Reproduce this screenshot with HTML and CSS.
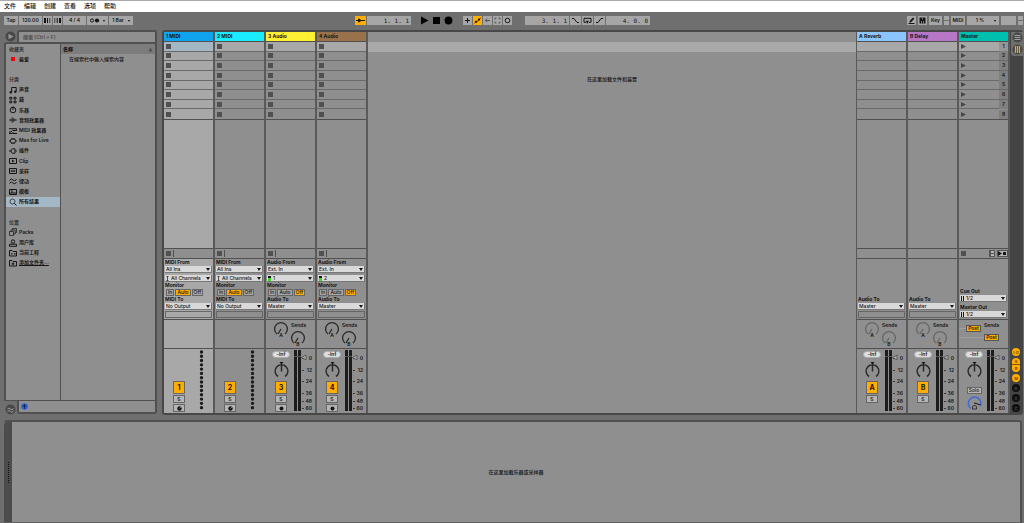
FILE: index.html
```html
<!DOCTYPE html>
<html lang="zh-CN">
<head>
<meta charset="utf-8">
<title>Live</title>
<link rel="stylesheet" href="styles.css">
</head>
<body>
<nav class="menu" aria-label="菜单">
  <button>文件</button><button>编辑</button><button>创建</button><button>查看</button><button>选项</button><button>帮助</button>
</nav>

<header class="toolbar">
  <div class="cluster">
    <button class="ctl w14">Tap</button>
    <button class="ctl w23">120.00</button>
    <button class="ctl w9" aria-label="减速"><svg width="9" height="9"><path d="M1 2h2v5H1zM4 2h1v5H4zM6.500 2h.7v5h-.7z"/></svg></button>
    <button class="ctl w9" aria-label="加速"><svg width="9" height="9"><path d="M1.500 2h.7v5h-.7zM3.700 2h1v5h-1zM6 2h2v5H6z"/></svg></button>
    <button class="ctl w23">4 / 4</button>
    <button class="ctl w21 drop" aria-label="节拍器"><svg width="11" height="9"><circle cx="3" cy="4.500" r="1.600" class="ln"/><circle cx="8" cy="4.500" r="2.100"/></svg></button>
    <button class="ctl w24 drop">1 Bar</button>
  </div>
  <div class="cluster center">
    <button class="ctl w11 on" aria-label="跟随"><svg width="11" height="9"><path d="M1 4.500h9" class="ln"/><path d="M3.500 2.200 6.800 4.500 3.500 6.800 2.900 4.500z"/></svg></button>
    <button class="ctl w44 pos">1. 1. 1</button>
    <div class="transport">
      <button aria-label="播放"><svg class="solid" width="9" height="9"><path d="M1 .5 8.500 4.500 1 8.500z"/></svg></button>
      <button aria-label="停止"><svg class="solid" width="9" height="9"><path d="M1 1h7v7H1z"/></svg></button>
      <button aria-label="录制"><svg class="solid" width="9" height="9"><circle cx="4.500" cy="4.500" r="3.900"/></svg></button>
    </div>
    <button class="ctl w9" aria-label="叠录"><svg width="9" height="9"><path d="M4.500 2v5M2 4.500h5" class="ln"/></svg></button>
    <button class="ctl w9 on" aria-label="自动化"><svg width="9" height="9"><path d="M1.300 7.500 3 5.800 5.800 4.500 7.800 1.500" class="ln thin"/><circle cx="3" cy="5.800" r="1.100"/><circle cx="6" cy="3.500" r="1.100"/></svg></button>
    <button class="ctl w9" aria-label="恢复"><svg width="9" height="9"><path d="M2 4.500h5M4.200 2.700 2.300 4.500 4.200 6.300" class="ln dim"/></svg></button>
    <button class="ctl w9" aria-label="捕获"><svg width="9" height="9"><path d="M2 3.500V2h1.500M5.500 2H7v1.500M7 5.500V7H5.500M3.500 7H2V5.500" class="ln dim"/></svg></button>
    <button class="ctl w9" aria-label="会话录制"><svg width="9" height="9"><circle cx="4.500" cy="4.500" r="2.300" class="ln"/></svg></button>
    <button class="ctl w44 pos loop">3. 1. 1</button>
    <button class="ctl w11" aria-label="穿入"><svg width="11" height="9"><path d="M2 2.500h2L7 6.500h2" class="ln"/></svg></button>
    <button class="ctl w11" aria-label="循环"><svg width="11" height="9"><path d="M4 6.300H2V2.300h7v4H7" class="ln"/><path d="M3.800 4.800h3L5.300 8z"/></svg></button>
    <button class="ctl w11" aria-label="穿出"><svg width="11" height="9"><path d="M2 6.500h2L7 2.500h2" class="ln"/></svg></button>
    <button class="ctl w44 pos">4. 0. 0</button>
  </div>
  <div class="cluster right">
    <button class="ctl w9" aria-label="绘制"><svg width="9" height="9"><path d="M1.500 7.500h6" class="ln"/><path d="m2.300 6.500.5-1.700L6 1.500l1.300 1.200L4 6.200z"/></svg></button>
    <button class="ctl w9" aria-label="键盘"><svg width="9" height="9"><path d="M1.500 1.500h6v6h-6z"/><path d="M3.500 5v2.500M5.500 5v2.500M4.500 1.500v2" class="ln pale thin"/></svg></button>
    <button class="ctl w13">Key</button>
    <span class="ctl lamp"></span>
    <button class="ctl w14">MIDI</button>
    <button class="ctl w32 drop">1 %</button>
    <span class="ctl w15"></span>
    <span class="ctl lamp"></span>
  </div>
</header>

<main class="main">
  <section class="browser">
    <div class="brow">
      <button class="round" aria-label="显示浏览器"><svg width="11" height="11"><circle cx="5.500" cy="5.500" r="5"/><path d="m3.500 2.700 5 2.800-5 2.800z" class="pale-fill"/></svg></button>
      <input class="search" type="search" aria-label="搜索" placeholder="搜索 (Ctrl + F)">
    </div>
    <div class="bbody">
      <ul class="side" id="side"></ul>
      <div class="files">
        <div class="fhead"><b>名称</b><svg width="5" height="5"><path d="M2.500.5 4.500 4.500h-4z"/></svg></div>
        <p>在搜索栏中输入搜索内容</p>
      </div>
    </div>
    <div class="brow foot">
      <button class="round" aria-label="律动库"><svg width="11" height="11"><circle cx="5.500" cy="5.500" r="5"/><path d="M2.500 5q1.500-2 3 0t3-.5M2.500 7.500q1.500-2 3 0t3-.5" class="ln pale"/></svg></button>
      <div class="preview"><button aria-label="试听"><svg width="7" height="7"><circle cx="3.500" cy="3.500" r="3.300" class="blue-fill"/><path d="M1.500 3h4M3.500 1v5" class="ln thin"/></svg></button></div>
    </div>
  </section>

  <section class="session">
    <div class="tracks" id="tracks"></div>
    <div class="dropzone"><div class="dz-head"></div><div class="dz-row"></div><p>在这里加载文件和装置</p></div>
    <div class="tracks" id="returns"></div>
    <div class="rail">
      <div class="views">
        <button aria-label="编排视图"><svg width="11" height="11"><circle cx="5.500" cy="5.500" r="5"/><path d="M2.500 3.500h6M2.500 5.500h6M2.500 7.500h6" class="ln pale"/></svg></button>
        <button aria-label="会话视图"><svg width="11" height="11"><circle cx="5.500" cy="5.500" r="5"/><path d="M3.500 2v7M5.500 2v7M7.500 2v7" class="ln gold"/></svg></button>
      </div>
      <div class="toggles">
        <button class="lit">I·O</button>
        <div class="pair"><button class="lit">S</button><button class="lit">R</button></div>
        <button class="lit">M</button><button>D</button><button>X</button><button>C</button>
      </div>
    </div>
  </section>
</main>

<section class="detail">
  <div class="grip"><i></i></div>
  <p>在这里加载乐器或采样器</p>
</section>
<script src="app.js"></script>
</body>
</html>
```

FILE: styles.css
```css
* { box-sizing: border-box; }
html, body { height: 100%; margin: 0; }
body {
  display: flex; flex-direction: column;
  background: #6f6f6f; color: #151515;
  font: 600 5px/7px Inter, "Noto Sans CJK SC", sans-serif;
  overflow: hidden;
}
button, input, select {
  font: inherit; color: inherit; margin: 0; padding: 0; border: 0;
  background: none; border-radius: 0; outline: 0;
}
button { display: flex; align-items: center; justify-content: center; white-space: nowrap; }
svg { display: block; fill: #151515; overflow: visible; flex: none; }
.ln { fill: none; stroke: #151515; stroke-width: 1; }
.thin { stroke-width: .7; }
.dim { stroke: #555; }
.pale { stroke: #a0a0a0; }
.gold { stroke: #f0a51a; stroke-width: 1.2; }
.solid { fill: #000; }
.pale-fill { fill: #969696; }
.blue-fill { fill: #2c62e0; }
p { margin: 0; font-weight: 500; }

.menu {
  display: flex; align-items: flex-start; gap: 8px; height: 12px; padding: 1px 4px 0;
  background: #fff; border-top: 1px solid #aaa; font-size: 6px; font-weight: 500; flex: none;
}

.toolbar {
  display: grid; grid-template-columns: 1fr auto 1fr; align-items: center;
  height: 18px; padding: 0 1px 1px 4px; flex: none;
}
.cluster { display: flex; gap: 1px; }
.center { margin-right: 22px; }
.right { justify-content: flex-end; gap: 2px; }
.ctl { height: 9px; background: #a6a6a6; position: relative; flex: none; }
.w9 { width: 9px; } .w11 { width: 11px; } .w13 { width: 13px; } .w14 { width: 14px; }
.w15 { width: 15px; } .w21 { width: 21px; } .w23 { width: 23px; } .w24 { width: 24px; }
.w32 { width: 32px; } .w44 { width: 44px; }
.on { background: #ffad00; }
.drop { padding-right: 6px; }
.drop::after {
  content: ""; position: absolute; right: 3px; top: 4px;
  border: 1px solid transparent; border-top: 2px solid #151515;
}
.pos { justify-content: flex-end; padding-right: 2px; font: 6px/7px "DejaVu Sans Mono", monospace; white-space: pre; }
.loop { margin-left: 12px; }
.transport { display: flex; gap: 3px; margin: 0 9px 0 8px; }
.lamp { width: 5px; }
.lamp::after { content: ""; position: absolute; left: 0; right: 0; top: 4px; height: 1px; background: #6f6f6f; }

.main { flex: 1; display: flex; gap: 5px; min-height: 0; padding: 0 1px 0 4px; }

.browser { width: 153px; display: flex; flex-direction: column; flex: none; }
.brow { display: flex; }
.round { width: 12px; height: 12px; border-radius: 6px; }
.round svg, .views svg { fill: #484848; }
.search, .preview {
  flex: 1; min-width: 0; margin-left: 1px; height: 12px; padding: 0 4px;
  background: #8f8f8f; border: 2px solid #505050; border-bottom: 0; border-radius: 3px 3px 0 0;
}
.search { appearance: none; }
.search::placeholder { color: #4c4c4c; opacity: 1; }
.bbody {
  flex: 1; display: flex; min-height: 0; background: #8f8f8f;
  border: 2px solid #505050; border-bottom-width: 1px; border-radius: 3px 0 0 0;
}
.side {
  width: 54px; height: 224px; margin: 0; padding: 0; list-style: none;
  display: grid; grid-template-rows: repeat(22, 1fr); flex: none;
}
.side li { display: flex; align-items: center; padding-left: 3px; color: #333; }
.side button { width: 100%; justify-content: flex-start; gap: 2px; color: #151515; }
.side .sel { background: #a3b7c4; }
.side .add span { text-decoration: underline; }
.files { flex: 1; border-left: 1px solid #505050; }
.fhead {
  display: flex; justify-content: space-between; align-items: center;
  height: 10px; padding: 0 2px; background: #7c7c7c;
}
.fhead svg { fill: #505050; }
.files p { padding: 2px 8px; }
.foot { align-items: flex-start; }
.foot .round { margin-top: 2px; }
.preview {
  display: flex; align-items: center; padding: 0 2px; height: 13px;
  border: 2px solid #505050; border-top: 0; border-radius: 0 0 3px 3px;
}

.session {
  flex: 1; display: flex; min-width: 0; background: #8f8f8f;
  border: 2px solid #484848; border-right: 0; border-radius: 3px;
}
.tracks { display: flex; flex: none; }
.dropzone { flex: 1; min-width: 0; text-align: center; border-right: 1px solid #5a5a5a; }
.dz-head { height: 10px; }
.dz-row { height: 10px; background: #a8a8a8; }
.dropzone p { margin-top: 24px; }
.track { width: 51px; display: flex; flex-direction: column; border-right: 2px solid #5a5a5a; }
.track.light { background: #a8a8a8; }
.name { height: 10px; padding: 0 2px; border-bottom: 1px solid #505050; justify-content: flex-start; font-weight: 700; }
.c1 { background: #10a4ee; } .c2 { background: #1aebff; } .c3 { background: #fff034; }
.c4 { background: #99724b; } .ca { background: #8bc5ff; } .cb { background: #b677c6; } .cm { background: #00bfaf; }
.slots { height: 78px; display: grid; grid-template-rows: repeat(8, minmax(0, 1fr)); border-bottom: 1px solid #505050; }
.slot { display: flex; align-items: center; justify-content: flex-start; padding-left: 2px; border-bottom: 1px solid #6a6a6a; }
.slot:first-child { background: #a8a8a8; }
.light .slot:first-child { background: #a5b7c4; }
.slot:last-child { border-bottom: 0; }
.slot b { margin-left: auto; width: 9px; height: 9px; line-height: 9px; text-align: center; background: #7f7f7f; font-weight: 600; }
.slot:first-child b { background: #969696; }
.sq { width: 5px; height: 5px; background: #505050; }
.empty { flex: 1; }
.stop {
  height: 11px; display: flex; align-items: center; gap: 2px; padding-left: 2px;
  background: #8f8f8f; border: 1px solid #505050; border-width: 1px 0;
}
.bar { width: 1px; height: 7px; background: #505050; }
.mini { height: 7px; background: #b5b5b5; border: 1px solid #555; }
.push { margin-left: auto; }

.io { height: 60px; padding: 0 1px 1px; display: flex; flex-direction: column; justify-content: flex-end; }
.io h4 { margin: 0; height: 7px; font: inherit; font-weight: 700; white-space: nowrap; }
.pick { position: relative; height: 7px; background: #d9d9d9; border: 1px solid #777; border-width: 0 1px 1px 0; display: flex; align-items: center; font-weight: 500; }
.pick select { width: 100%; height: 6px; line-height: 6px; padding-left: 1px; appearance: none; }
.pick svg { margin-left: 1px; }
.pick svg + select { padding-left: 2px; }
.pick::after {
  content: ""; position: absolute; right: 1px; top: 2px;
  border: 2px solid transparent; border-top: 3px solid #151515; border-bottom: 0;
}
.io .gap { margin-top: 2px; }
.mon { display: flex; gap: 1px; height: 7px; padding-left: 1px; }
.mon button { height: 7px; padding: 0 1px; background: #a6a6a6; border: 1px solid #666; line-height: 5px; font-weight: 500; }
.mon .on { background: #ffad00; }
.box { height: 7px; margin-top: 1px; border: 1px solid #666; }

.sends { height: 30px; border: 1px solid #505050; border-width: 1px 0; position: relative; }
.sends svg text, .mix svg text { font: 600 5px Inter, sans-serif; }
.faint .ring { stroke: #666; }
.ring { fill: none; stroke: #2a2a2a; stroke-width: 1; }
.post { position: absolute; height: 7px; width: 15px; background: #ffad00; border: 1px solid #555; }
.p1 { left: 7px; top: 5px; }
.p2 { left: 25px; top: 14px; }

.mix { height: 64px; padding: 2px 0 1px; display: flex; justify-content: space-between; }
.strip { width: 28px; padding-left: 2px; display: flex; flex-direction: column; align-items: center; }
.strip button { background: #b5b5b5; border: 1px solid #666; width: 12px; height: 8px; }
.strip .inf { width: 18px; height: 7px; border: 1px solid #aaa; border-radius: 4px; background: #dedede; }
.strip .pan { margin-top: 4px; }
.strip .act { height: 13px; margin: 3px 0 1px; background: #ffad00; font-size: 7px; font-weight: 700; }
.strip .first { margin-top: 30px; }
.strip .arm { margin-top: 1px; }
.strip .solo { width: 15px; height: 7px; margin: 9px 0 2px; font-weight: 500; }
.meter { margin-top: -1px; }

.rail { flex: none; width: 13px; background: #444; display: flex; flex-direction: column; justify-content: space-between; align-items: flex-end; }
.views { background: #6f6f6f; width: 12px; padding: 0 0 1px 1px; display: flex; flex-direction: column; gap: 1px; border-radius: 0 0 0 3px; }
.views button { width: 11px; height: 11px; }
.toggles { display: flex; flex-direction: column; gap: 2px; width: 8px; margin-right: 3px; padding-bottom: 1px; }
.toggles button { width: 8px; height: 8px; border-radius: 4px; background: #101010; color: #555; font-size: 4px; }
.toggles button.lit { background: #ffad00; color: #5a4000; }
.toggles .pair button:first-child { border-radius: 4px 4px 0 0; height: 7px; border-bottom: 1px solid #7a5800; }
.toggles .pair button:last-child { border-radius: 0 0 4px 4px; height: 7px; }
.detail {
  flex: none; height: 103px; margin: 5px 2px 0 4px; display: flex;
  background: #8f8f8f; border: 2px solid #505050; border-left: 0; border-bottom: 1px solid #606060;
  border-radius: 3px 3px 0 0;
}
.detail p { flex: 1; align-self: center; text-align: center; }
.grip { width: 8px; background: #4c4c4c; display: flex; align-items: center; justify-content: center; border-radius: 3px 0 0 0; }
.grip i { height: 21px; border-left: 1px dotted #111; }
```

FILE: app.js
```js
const svg = (w, h, body, cls = "") => `<svg class="${cls}" width="${w}" height="${h}">${body}</svg>`;

const icons = {
  fav: '<path d="M2 2h4v4H2z" style="fill:#f00"/>',
  note: '<path d="M2.700 6V1.500h4.500V5.500" class="ln"/><circle cx="1.800" cy="6.300" r="1.200"/><circle cx="6.300" cy="5.800" r="1.200"/>',
  drum: '<path d="M.8 1.300h2v1.800h-2zM5 1.300h2v1.800H5zM.8 5h2v1.800h-2zM5 5h2v1.800H5z" class="ln"/>',
  dial: '<circle cx="4" cy="4" r="2.800" class="ln"/><path d="M4 4V.5" class="ln"/>',
  wave: '<path d="M0 4h8M2 2.500v3M3.300 1v6M4.700 2v4M6 3v2" class="ln thin"/>',
  midi: '<path d="M0 1.700h7.500v1.800H3.500L2 5H0M3.500 6.500H8M0 6.500h3l1.500-1.500" class="ln"/>',
  max: '<rect x="1.500" y="2" width="5" height="4" rx="1.500" class="ln"/><path d="M0 4h1.500M6.500 4H8M3 1v1M5 1v1M3 6v1M5 6v1" class="ln"/>',
  plug: '<path d="M0 4h2M6.500 4H8M6 1.800H3.500Q2 2 2 4t1.500 2.200H6z" class="ln"/>',
  clip: '<path d="M.5 1.500h7v5h-7z" class="ln"/><path d="m3 2.500 2.500 1.500L3 5.500z"/>',
  sample: '<path d="M.5 1.500h7v5h-7z" class="ln"/><path d="M1.500 4h5M2.800 2.800v2.400M4 3.200v1.600M5.300 2.800v2.400" class="ln thin"/>',
  groove: '<path d="M.5 3.500q1.700-3 3.500-.5t3.500-1M.5 6.500q1.700-3 3.500-.5t3.500-1" class="ln"/>',
  tmpl: '<path d="M.5 1.500h7v5h-7zM.5 5h7M3 1.500V5" class="ln"/>',
  find: '<circle cx="3.500" cy="3.500" r="2.500" class="ln thin"/><path d="m5.300 5.300 2.200 2.200" class="ln"/>',
  packs: '<path d="M.5 3.500h4v4h-4zM2 3.500V2h4.200v4H4.500M3.500 2V.5h4v4H6.200" class="ln thin"/>',
  user: '<circle cx="4" cy="2.500" r="1.700" class="ln"/><path d="M.5 7.300V5.200h7v2.100z" class="ln"/>',
  folder: '<path d="M.5 1.500h2.500l1 1h3.500V7h-7z" class="ln"/><path d="M2 4.300h1.500v1.200H2zM5 4.300h1.500v1.200H5z"/>',
  add: '<path d="M.5 1.500h2.500l1 1h3.500V7h-7z" class="ln"/><path d="M4 3.500v2.600M2.700 4.800h2.600" class="ln"/>'
};

const side = [
  ["收藏夹"], ["最爱", "fav"], [""], ["分类"], ["声音", "note"], ["鼓", "drum"], ["乐器", "dial"],
  ["音频效果器", "wave"], ["MIDI 效果器", "midi"], ["Max for Live", "max"], ["插件", "plug"], ["Clip", "clip"],
  ["采样", "sample"], ["律动", "groove"], ["模板", "tmpl"], ["所有结果", "find"], [""], ["位置"],
  ["Packs", "packs"], ["用户库", "user"], ["当前工程", "folder"], ["添加文件夹...", "add"]
];
document.getElementById("side").innerHTML = side.map(([text, icon]) => {
  const cls = icon === "find" ? "sel" : icon === "add" ? "add" : "";
  return `<li class="${cls}">${icon ? `<button>${svg(8, 8, icons[icon])}<span>${text}</span></button>` : text}</li>`;
}).join("");

const square = '<i class="sq"></i>';
const playIcon = svg(5, 5, '<path d="M0 0 5 2.500 0 5z" style="fill:#484848"/>');
const pins = svg(3, 5, '<path d="M.5.5h2M1.500.5v4M.5 4.500h2" class="ln thin"/>');
const level = svg(3, 5, '<path d="M0 0h3v2H0z"/><path d="M0 2h3v3H0z" style="fill:#3ad820"/>');
const stereo = svg(3, 5, '<path d="M0 0h1v5H0zM2 0h1v5H2z"/>');

const pick = (label, value, icon = "", cls = "") =>
  `<div class="pick ${cls}">${icon}<select aria-label="${label}"><option>${value}</option></select></div>`;

function monitor(active) {
  return `<div class="mon">${["In", "Auto", "Off"].map(m => `<button class="${m === active ? "on" : ""}">${m}</button>`).join("")}</div>`;
}

function io(t) {
  if (t.kind === "master") {
    return `<h4>Cue Out</h4>${pick("Cue Out", "1/2", stereo)}<h4 class="gap">Master Out</h4>${pick("Master Out", "1/2", stereo)}`;
  }
  const midi = t.kind === "midi";
  const word = midi ? "MIDI" : "Audio";
  const from = t.kind === "return" ? "" :
    `<h4>${word} From</h4>${pick(word + " From", midi ? "All Ins" : "Ext. In")}` +
    pick("Channel", midi ? "All Channels" : t.input, midi ? pins : level, "gap") +
    `<h4>Monitor</h4>${monitor(midi ? "Auto" : "Off")}`;
  return `${from}<h4>${word} To</h4>${pick(word + " To", midi ? "No Output" : "Master")}<div class="box"></div>`;
}

function sendKnob(x, y, name) {
  return `<path class="ring" style="stroke-width:1.300" d="M${x - 4} ${y + 5}A6.400 6.400 0 1 1 ${x + 4} ${y + 5}M${x} ${y}L${x - 3} ${y + 5}"/>
    <text x="${x}" y="${y + 8}" text-anchor="middle">${name}</text>`;
}

function sends(t) {
  if (t.kind === "midi") return "";
  if (t.kind === "master") {
    return svg(49, 28, '<path d="M0 8.500h7M0 17.500h25" class="ln pale"/><text x="25" y="7">Sends</text>') +
      '<button class="post p1">Post</button><button class="post p2">Post</button>';
  }
  return svg(49, 28, sendKnob(15, 9, "A") + sendKnob(32, 18, "B") + '<text x="25" y="7">Sends</text>',
    t.kind === "return" ? "faint" : "");
}

function meter(t) {
  if (t.kind === "midi") {
    return svg(21, 60, '<path d="M9.500 2v57" style="stroke:#1c1c1c;stroke-width:3.400;stroke-linecap:round;stroke-dasharray:0 4.280"/>', "meter");
  }
  const marks = [[0, 8], [12, 20], [24, 31], [36, 43], [48, 51], [60, 58]];
  const scale = marks.map(([n, y]) => `<path d="M8 ${y + .5}h2" class="ln thin"/><text x="18" y="${y + 2}" text-anchor="end">${n}</text>`).join("");
  return svg(21, 61, `<path d="M0 0h3v61H0zM4 0h3v61H4z" style="fill:#1c1c1c"/><path d="M0 6.500h7" class="ln dim"/>${scale}
    <path d="M7.500 7.500 12 5v5z" style="fill:#aaa;stroke:#444;stroke-width:.7"/>`, "meter");
}

function strip(t) {
  if (t.kind === "midi") {
    return `<button class="act first">${t.key}</button><button>S</button>
      <button class="arm" aria-label="录音准备">${svg(5, 5, '<circle cx="2.500" cy="2.500" r="2.200"/><path d="m2.500 2.500 1.500-1.500" class="ln pale thin"/>')}</button>`;
  }
  const pan = svg(15, 16, '<path class="ring" style="stroke-width:1.500" d="M4 14.500A6.400 6.400 0 1 1 11 14.500M7.500 2v7.500"/><path d="M5.500 0h4l-2 2.700z"/>', "pan");
  const head = `<button class="inf">-Inf</button>${pan}`;
  if (t.kind === "master") {
    return head + '<button class="solo">Solo</button>' +
      svg(15, 15, '<path d="M4 12.500A6.300 6.300 0 1 1 13.300 10" style="fill:none;stroke:#4169d8;stroke-width:1.500"/><path d="m7 7 6.500 1.800" class="ln"/><path d="M5.500 11q0-1.500 2-1.500t2 1.500v2h-4z" class="ln thin"/>');
  }
  const arm = t.kind === "audio" ? `<button class="arm" aria-label="录音准备">${svg(5, 5, '<circle cx="2.500" cy="2.500" r="2"/>')}</button>` : "";
  return `${head}<button class="act">${t.key}</button><button>S</button>${arm}`;
}

function slots(t) {
  return Array.from({ length: 8 }, (_, i) => {
    const body = t.kind === "master" ? `${playIcon}<b>${i + 1}</b>` : t.kind === "return" ? "" : square;
    return `<button class="slot" aria-label="${t.name} ${i + 1}">${body}</button>`;
  }).join("");
}

function stop(t) {
  if (t.kind === "return") return "";
  if (t.kind === "master") {
    return square + `<button class="mini push" aria-label="返回编排">${svg(4, 5, '<path d="M.5 0v5M1 2.500h3" class="ln dim"/>')}</button>
      <button class="mini" aria-label="播放场景">${svg(9, 5, '<path d="M0 0 4 2.500 0 5zM5 1h3v3H5z"/>')}</button>`;
  }
  return square + '<i class="bar"></i>';
}

function track(t) {
  return `<article class="track ${t.light ? "light" : ""}">
    <button class="name ${t.color}">${t.name}</button>
    <div class="slots">${slots(t)}</div><div class="empty"></div>
    <div class="stop">${stop(t)}</div>
    <div class="io">${io(t)}</div>
    <div class="sends">${sends(t)}</div>
    <div class="mix"><div class="strip">${strip(t)}</div>${meter(t)}</div>
  </article>`;
}

document.getElementById("tracks").innerHTML = [
  { name: "1 MIDI", key: "1", kind: "midi", color: "c1", light: true },
  { name: "2 MIDI", key: "2", kind: "midi", color: "c2" },
  { name: "3 Audio", key: "3", kind: "audio", color: "c3", input: "1" },
  { name: "4 Audio", key: "4", kind: "audio", color: "c4", input: "2" }
].map(track).join("");

document.getElementById("returns").innerHTML = [
  { name: "A Reverb", key: "A", kind: "return", color: "ca" },
  { name: "B Delay", key: "B", kind: "return", color: "cb" },
  { name: "Master", key: "", kind: "master", color: "cm" }
].map(track).join("");
```
